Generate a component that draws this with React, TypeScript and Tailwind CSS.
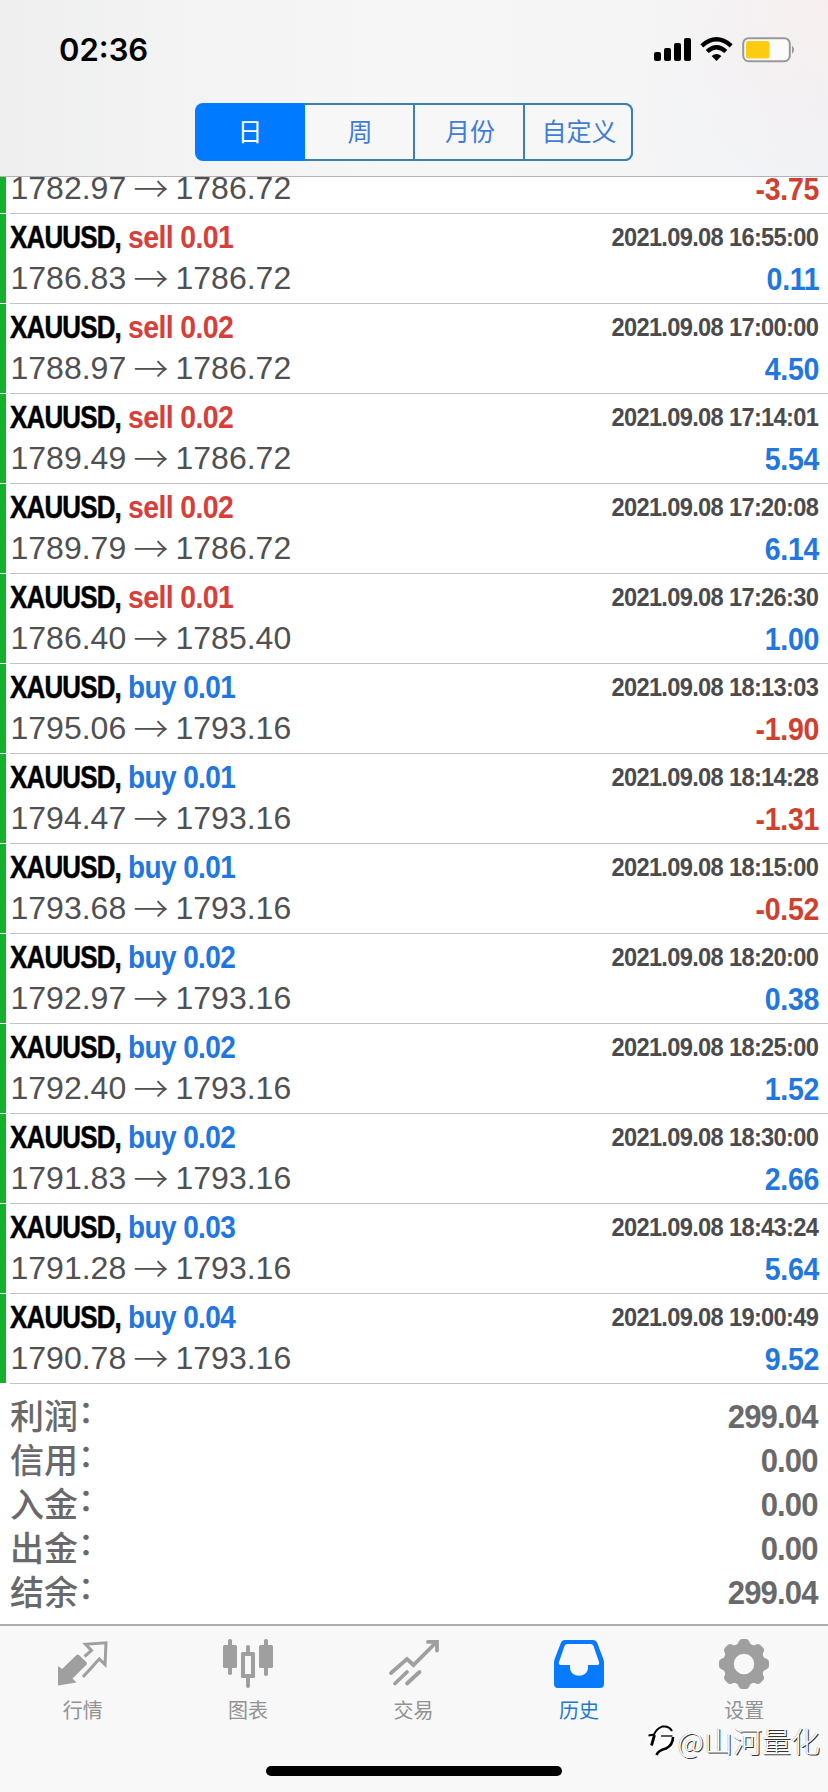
import type { ReactNode } from "react";

type Deal = {
  side?: "buy" | "sell";
  lots?: string;
  time?: string;
  open: string;
  close: string;
  profit: string;
};

const deals: Deal[] = [
  { side: "sell", lots: "0.01", time: "16:55:00", open: "1786.83", close: "1786.72", profit: "0.11" },
  { side: "sell", lots: "0.02", time: "17:00:00", open: "1788.97", close: "1786.72", profit: "4.50" },
  { side: "sell", lots: "0.02", time: "17:14:01", open: "1789.49", close: "1786.72", profit: "5.54" },
  { side: "sell", lots: "0.02", time: "17:20:08", open: "1789.79", close: "1786.72", profit: "6.14" },
  { side: "sell", lots: "0.01", time: "17:26:30", open: "1786.40", close: "1785.40", profit: "1.00" },
  { side: "buy", lots: "0.01", time: "18:13:03", open: "1795.06", close: "1793.16", profit: "-1.90" },
  { side: "buy", lots: "0.01", time: "18:14:28", open: "1794.47", close: "1793.16", profit: "-1.31" },
  { side: "buy", lots: "0.01", time: "18:15:00", open: "1793.68", close: "1793.16", profit: "-0.52" },
  { side: "buy", lots: "0.02", time: "18:20:00", open: "1792.97", close: "1793.16", profit: "0.38" },
  { side: "buy", lots: "0.02", time: "18:25:00", open: "1792.40", close: "1793.16", profit: "1.52" },
  { side: "buy", lots: "0.02", time: "18:30:00", open: "1791.83", close: "1793.16", profit: "2.66" },
  { side: "buy", lots: "0.03", time: "18:43:24", open: "1791.28", close: "1793.16", profit: "5.64" },
  { side: "buy", lots: "0.04", time: "19:00:49", open: "1790.78", close: "1793.16", profit: "9.52" },
];

const totals = [
  ["利润", "299.04"],
  ["信用", "0.00"],
  ["入金", "0.00"],
  ["出金", "0.00"],
  ["结余", "299.04"],
];

function PriceLine({ deal }: { deal: Deal }) {
  const loss = deal.profit.startsWith("-");
  return (
    <div className="flex h-9 items-center justify-between pl-[10.5px] pr-[10px]">
      <div className="flex items-center pb-px text-[32px] leading-9 text-[#505052]">
        <span className="w-[123px]">{deal.open}</span>
        <span className="w-[42px] pb-[1px] font-['Noto_Sans_CJK_SC','Noto_Sans_CJK_JP',sans-serif] text-[35px] font-light leading-8">
          →
        </span>
        <span>{deal.close}</span>
      </div>
      <span
        className={`origin-right translate-x-px scale-x-[0.92] pt-[3px] text-[31px] font-bold leading-9 tracking-[-0.3px] ${
          loss ? "text-[#d0402f]" : "text-[#2176e0]"
        }`}
      >
        {deal.profit}
      </span>
    </div>
  );
}

function DealRow({ deal }: { deal: Deal }) {
  return (
    <div className="flex h-[90px]">
      <div className="h-[89px] w-[6px] bg-[#14b12c]" />
      <div className="ml-1 flex-1 border-b border-[#c3c3c5]">
        <div className="flex h-[46px] justify-between pr-[10px] leading-[46px]">
          <div className="flex text-[32px] font-bold">
            <span className="w-[118px]">
              <span className="inline-block origin-left scale-x-[0.81] whitespace-nowrap tracking-[-1px] text-black [-webkit-text-stroke:0.5px_#000]">
                XAUUSD,
              </span>
            </span>
            <span
              className={`inline-block origin-left whitespace-nowrap tracking-[-0.7px] ${
                deal.side === "sell" ? "scale-x-[0.89] text-[#d63f3a]" : "scale-x-[0.875] text-[#2176e0]"
              }`}
            >
              {deal.side} {deal.lots}
            </span>
          </div>
          <span className="origin-right scale-x-[0.91] text-[26px] font-bold tracking-[-0.75px] text-[#4b4b4e]">
            2021.09.08 {deal.time}
          </span>
        </div>
        <div className="-ml-[10px]">
          <PriceLine deal={deal} />
        </div>
      </div>
    </div>
  );
}

function StatusIcons() {
  return (
    <svg width="144" height="28" viewBox="0 0 144 28">
      <g fill="#000">
        <rect x="1" y="15" width="7" height="9" rx="2" />
        <rect x="11" y="11" width="7" height="13" rx="2" />
        <rect x="21" y="6" width="7" height="18" rx="2" />
        <rect x="31" y="1" width="7" height="23" rx="2" />
        <path d="M63.5 24 L58.6 18.9 Q63.5 15 68.4 18.9 Z" />
      </g>
      <g fill="none" stroke="#000" strokeWidth="4.4">
        <path d="M48.8 8.8 Q63.5 -4.2 78.2 8.8" />
        <path d="M54.2 14.5 Q63.5 6 72.8 14.5" />
      </g>
      <rect x="90.2" y="1.2" width="46.6" height="23" rx="5.5" fill="#fbfbfb" stroke="#98989a" strokeWidth="2" />
      <rect x="93" y="4" width="23.5" height="17.5" rx="2.5" fill="#fccb12" />
      <path d="M139 8.5 Q143 12.7 139 17 Z" fill="#98989a" />
    </svg>
  );
}

const gearTeeth = [0, 45, 90, 135, 180, 225, 270, 315];

const tabs: { label: string; active?: boolean; icon: ReactNode }[] = [
  {
    label: "行情",
    icon: (
      <>
        <path d="M0 26 L4 29 L18.500 15 Q19.800 14 21 15 L28.500 22.300 Q29.500 23.500 28.500 24.700 L14.500 38.500 L18.500 42.500 L0 45.500 Z" fill="#9f9f9f" />
        <path d="M26.500 16.500 L33.500 10.500 L27.500 4.300 L48 2.800 L47 24.500 L41.300 19 L25 37" fill="none" stroke="#9f9f9f" strokeWidth="3" />
      </>
    ),
  },
  {
    label: "图表",
    icon: (
      <g fill="#9f9f9f">
        <rect x="0" y="5" width="14" height="23" rx="1.5" />
        <rect x="5" y="-1" width="4" height="36" rx="1.8" />
        <rect x="36" y="5" width="14" height="23" rx="1.5" />
        <rect x="41" y="-1" width="4" height="37" rx="1.8" />
        <path d="M19.500 12 H23 V7 Q23 5 25 5 T27 7 V12 H30.500 Q32 12 32 13.500 V36.500 Q32 38 30.500 38 H27 V46 Q27 48 25 48 T23 46 V38 H19.500 Q18 38 18 36.500 V13.500 Q18 12 19.500 12 Z M22 16 V34 H28 V16 Z" fillRule="evenodd" />
      </g>
    ),
  },
  {
    label: "交易",
    icon: (
      <g fill="none" stroke="#9f9f9f" strokeWidth="3.8" strokeLinecap="round">
        <path d="M2 33 L18 19 L24.500 25 L47 2.500" strokeLinejoin="miter" />
        <path d="M39 1.900 H48 V10.500" />
        <path d="M6 43.500 L18 32" />
        <path d="M18 43.500 L30.500 32" />
      </g>
    ),
  },
  {
    label: "历史",
    active: true,
    icon: (
      <>
        <path d="M11 0 H39 Q42 0 43.200 3 L49 18 Q50 20.500 50 23 V44 Q50 48 46 48 H4 Q0 48 0 44 V23 Q0 20.500 1 18 L6.800 3 Q8 0 11 0 Z" fill="#087aff" />
        <path d="M13.500 4 H36.500 Q38.700 4 39.500 6 L45 22 Q46 25 43 25 H34 V27.500 C34 38.500 16 38.500 16 27.500 V25 H7 Q4 25 5 22 L10.500 6 Q11.300 4 13.500 4 Z" fill="#f8f8f8" />
      </>
    ),
  },
  {
    label: "设置",
    icon: (
      <g transform="translate(25 24)">
        <circle r="15.500" fill="none" stroke="#9f9f9f" strokeWidth="10.500" />
        {gearTeeth.map((a) => (
          <path
            key={a}
            transform={`rotate(${a})`}
            d="M-8.500 -18 Q-6 -20 -5.200 -22.500 Q-4.500 -25 -2 -25 H2 Q4.500 -25 5.200 -22.500 Q6 -20 8.500 -18 Z"
            fill="#9f9f9f"
          />
        ))}
      </g>
    ),
  },
];

const segments = ["日", "周", "月份", "自定义"];

export default function App() {
  return (
    <div className="flex h-[1792px] w-[828px] flex-col overflow-hidden bg-white font-['Liberation_Sans','Noto_Sans_CJK_SC',sans-serif]">
      <header className="flex h-[177px] flex-col border-b border-[#b4b4b6] bg-[radial-gradient(circle_at_100%_0%,#f7efef_0,transparent_22%),radial-gradient(circle_at_100%_60%,#eff1f5_0,transparent_25%),linear-gradient(90deg,#eeefee_0,#f3f3f4_22%,#f6f6f6_45%,#f5f5f6_100%)]">
        <div className="flex h-[103px] items-start justify-between pl-[59px] pr-[31px]">
          <span className="mt-[31px] font-['Inter',sans-serif] text-[31px] font-semibold leading-[38px] text-black">
            02:36
          </span>
          <div className="mt-[37px]">
            <StatusIcons />
          </div>
        </div>
        <div className="mx-auto grid h-[58px] w-[438px] grid-cols-[110px_110px_110px_108px] overflow-hidden rounded-[8px] bg-[#007aff]">
          {segments.map((s, i) => (
            <div
              key={s}
              className={`flex items-center justify-center border-[#3c7fb0] font-['Noto_Sans_CJK_SC',sans-serif] text-[25px] leading-none ${
                i === 0 ? "pb-[3px] text-white" : "border-y-2 border-r-2 bg-[#f7f7f8] pb-[3px] pl-[2px] text-[#3f7cd8]"
              } ${i === 3 ? "rounded-r-[8px]" : ""}`}
            >
              <span>{s}</span>
            </div>
          ))}
        </div>
      </header>

      <main className="h-[1447px]">
        <div className="flex h-[37px]">
          <div className="h-9 w-[6px] bg-[#14b12c]" />
          <div className="ml-1 flex-1 border-b border-[#c3c3c5]">
            <div className="-ml-[10px] -mt-[7px]">
              <PriceLine deal={{ open: "1782.97", close: "1786.72", profit: "-3.75" }} />
            </div>
          </div>
        </div>
        {deals.map((d) => (
          <DealRow key={d.time} deal={d} />
        ))}
        <div className="pl-[10px] pr-[10px] pt-[10px]">
          {totals.map(([label, value]) => (
            <div key={label} className="flex h-11 items-center justify-between text-[#69696b]">
              <span className="flex pb-[3px] font-['Noto_Sans_CJK_SC',sans-serif] text-[34px] font-medium leading-[41px]">
                {label}
                <span className="-mt-[5px] text-[32px]">：</span>
              </span>
              <span className="origin-right scale-x-[0.94] pt-px text-[33px] font-bold leading-[44px] tracking-[-0.9px]">
                {value}
              </span>
            </div>
          ))}
        </div>
      </main>

      <footer className="relative flex h-[168px] flex-col items-center border-t-2 border-[#aeaeb0] bg-[#f8f8f8]">
        <nav className="flex w-full pr-[1px]">
          {tabs.map((t) => (
            <div
              key={t.label}
              className={`flex flex-1 flex-col items-center pt-[14px] ${t.active ? "text-[#2177d4]" : "text-[#929292]"}`}
            >
              <svg width="50" height="48" viewBox="0 0 50 48" className="overflow-visible">
                {t.icon}
              </svg>
              <span className="mt-[7px] font-['Noto_Sans_CJK_SC',sans-serif] text-[20px] leading-[30px]">{t.label}</span>
            </div>
          ))}
        </nav>
        <div className="absolute right-[8px] top-[96px] flex items-center gap-[2px]">
          <svg width="28" height="36" viewBox="0 0 28 36" className="overflow-visible">
            <circle cx="13" cy="17" r="13.500" fill="#fff" />
            <g fill="none" stroke="#000">
              <path d="M0.500 13.500 L6 12.500 Q8 7 14 4.600 Q21 3.500 24 9" strokeWidth="2" />
              <path d="M25 15 Q25 23 18 26.500 Q10 28.500 8.500 33" strokeWidth="2.600" />
              <path d="M3.500 23.500 L6.500 13" strokeWidth="2.800" />
              <path d="M13 14 H24.500" strokeWidth="1.300" />
            </g>
          </svg>
          <span className="font-['Noto_Sans_CJK_SC',sans-serif] text-[29px] font-light leading-[36px] text-white [text-shadow:1px_1px_0_#333,-0.5px_-0.5px_0_#aaa]">
            @山河量化
          </span>
        </div>
        <div className="absolute bottom-4 h-[10px] w-[296px] rounded-full bg-black" />
      </footer>
    </div>
  );
}
